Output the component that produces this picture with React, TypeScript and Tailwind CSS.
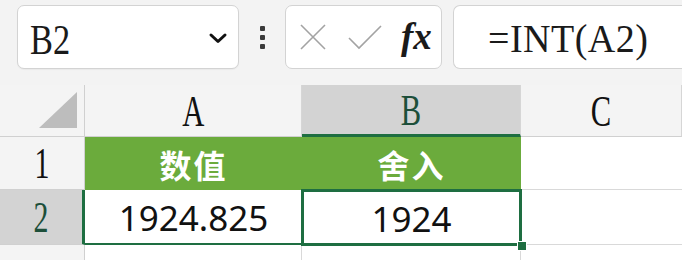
import React from 'react';

const serif = { fontFamily: '"Liberation Serif", "Times New Roman", serif' };

function NameBox() {
  return (
    <div className="ml-[17px] w-[222px] h-[64px] rounded-[7px] border border-[#d3d3d3] bg-white flex items-center justify-between pl-[12px] pr-[10px] shadow-[0_1px_1px_rgba(0,0,0,0.04)]">
      <span style={serif} className="text-[43px] leading-none text-[#1a1a1a] inline-block origin-left scale-x-[0.8] mt-[4px]">B2</span>
      <svg width="20" height="12" viewBox="0 0 20 12" className="mt-[2px]">
        <path d="M3 3 L10 9.5 L17 3" fill="none" stroke="#111" strokeWidth="3" strokeLinecap="round" strokeLinejoin="round" />
      </svg>
    </div>
  );
}

function Dots() {
  return (
    <div className="w-[46px] flex flex-col items-center justify-center gap-[4px] h-[64px]">
      <span className="w-[5px] h-[5px] rounded-[1px] bg-[#3a3a3a]" />
      <span className="w-[5px] h-[5px] rounded-[1px] bg-[#3a3a3a]" />
      <span className="w-[5px] h-[5px] rounded-[1px] bg-[#3a3a3a]" />
    </div>
  );
}

function FxBox() {
  return (
    <div className="w-[157px] h-[64px] rounded-[7px] border border-[#d3d3d3] bg-white flex items-center pl-[13px] pr-[8px]">
      {/* cancel */}
      <svg width="28" height="28" viewBox="0 0 28 28">
        <path d="M2 2 L26 26 M26 2 L2 26" stroke="#a3a3a3" strokeWidth="1.6" fill="none" />
      </svg>
      {/* enter */}
      <svg width="36" height="28" viewBox="0 0 36 28" className="ml-[20px]">
        <path d="M2 15 L12 25 L34 3" stroke="#a3a3a3" strokeWidth="1.6" fill="none" />
      </svg>
      <span style={serif} className="ml-[18px] text-[37px] leading-none italic font-bold text-[#1a1a1a] mt-[-1px]">fx</span>
    </div>
  );
}

function FormulaBox() {
  return (
    <div className="ml-[11px] flex-1 h-[64px] rounded-l-[7px] border border-r-0 border-[#d3d3d3] bg-white flex items-center pl-[34px]">
      <span style={serif} className="text-[40px] leading-none text-[#1a1a1a] tracking-[0.5px] mt-[4px] inline-block origin-left scale-x-[0.95]">=INT(A2)</span>
    </div>
  );
}

function ColHead({ label, selected }: { label: string; selected?: boolean }) {
  return (
    <div
      className={
        'flex items-center justify-center border-r border-[#d6d6d6] ' +
        (selected ? 'bg-[#d3d3d3] border-b-[3px] border-b-[#1e6e41]' : 'bg-[#f4f4f4] border-b border-b-[#d0d0d0]')
      }
    >
      <span
        style={serif}
        className={'text-[45px] leading-none inline-block scale-x-[0.68] mt-[2px] ' + (selected ? 'text-[#1d4f3a]' : 'text-[#111]')}
      >
        {label}
      </span>
    </div>
  );
}

function RowHead({ label, selected }: { label: string; selected?: boolean }) {
  return (
    <div
      className={
        'flex items-center justify-center border-b border-[#d0d0d0] ' +
        (selected ? 'bg-[#d3d3d3] border-r-[3px] border-r-[#1e6e41]' : 'bg-[#f4f4f4] border-r border-r-[#d0d0d0]')
      }
    >
      <span
        style={serif}
        className={'text-[44px] leading-none inline-block scale-x-[0.68] mt-[2px] ' + (selected ? 'text-[#1d4f3a]' : 'text-[#111]')}
      >
        {label}
      </span>
    </div>
  );
}

const cjk = { fontFamily: '"Noto Sans CJK SC", "Noto Sans", sans-serif' };
const sans = { fontFamily: '"Noto Sans", "Liberation Sans", sans-serif' };

export default function App() {
  return (
    <div className="w-[682px] h-[260px] overflow-hidden bg-[#f3f3f3]">
      {/* formula bar */}
      <div className="h-[85px] flex pt-[5px]">
        <NameBox />
        <Dots />
        <FxBox />
        <FormulaBox />
      </div>

      {/* sheet */}
      <div className="grid grid-cols-[85px_217px_219px_1fr] grid-rows-[52px_53px_55px_15px]">
        <div className="bg-[#f4f4f4] border-r border-b border-[#d0d0d0] flex items-end justify-end pr-[7px] pb-[8px]">
          <svg width="38" height="36" viewBox="0 0 38 36">
            <path d="M38 0 L38 36 L0 36 Z" fill="#bdbdbd" />
          </svg>
        </div>
        <ColHead label="A" />
        <ColHead label="B" selected />
        <ColHead label="C" />

        <RowHead label="1" />
        <div className="bg-[#6bab3c] flex items-center justify-center">
          <span style={cjk} className="text-[32px] font-bold text-white leading-none tracking-[2px]">数值</span>
        </div>
        <div className="bg-[#6bab3c] flex items-center justify-center">
          <span style={cjk} className="text-[32px] font-bold text-white leading-none tracking-[2px]">舍入</span>
        </div>
        <div className="bg-white border-b border-[#d9d9d9]" />

        <RowHead label="2" selected />
        <div className="bg-white border-b-2 border-[#1e6e41] flex items-center justify-center">
          <span style={sans} className="text-[35px] leading-none text-[#111] mt-[2px]">1924.825</span>
        </div>
        <div className="relative bg-white flex items-center justify-center">
          <span style={sans} className="text-[35px] leading-none text-[#111] mt-[2px]">1924</span>
          <div className="absolute inset-[-1px] border-[3px] border-[#1e6e41] pointer-events-none" />
          <div className="absolute right-[-6px] bottom-[-6px] w-[10px] h-[10px] bg-[#1e6e41] border border-white" />
        </div>
        <div className="bg-white border-b border-[#d9d9d9]" />

        <div className="bg-[#f4f4f4] border-r border-[#d0d0d0]" />
        <div className="bg-white border-r border-[#d9d9d9]" />
        <div className="bg-white border-r border-[#d9d9d9]" />
        <div className="bg-white" />
      </div>
    </div>
  );
}
